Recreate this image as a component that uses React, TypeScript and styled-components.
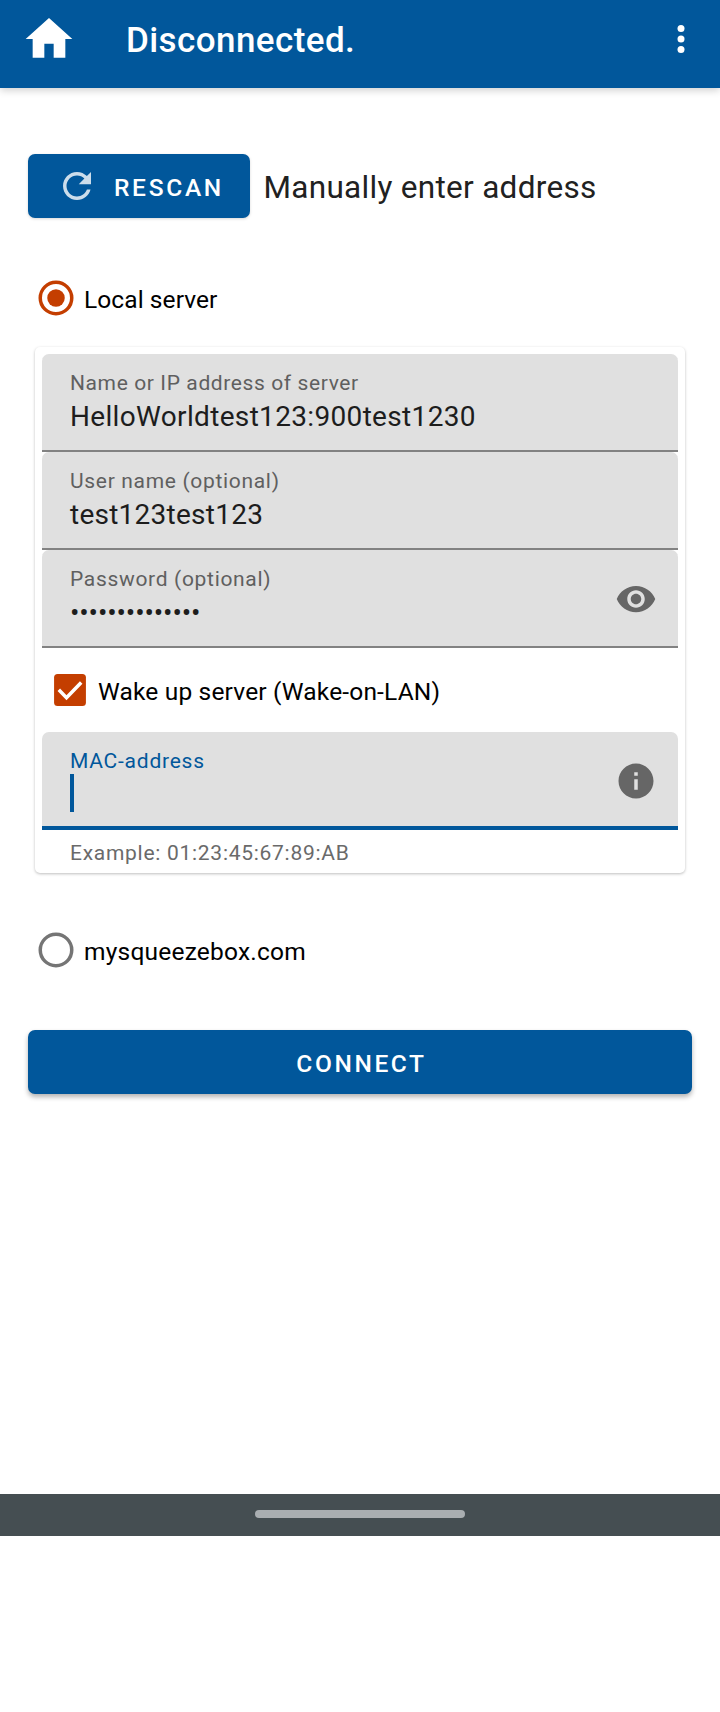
import React from 'react';
import styled, { createGlobalStyle } from 'styled-components';

const blue = '#01579b';
const orange = '#c43e00';

const GlobalStyle = createGlobalStyle`
  * { box-sizing: border-box; }
  body {
    margin: 0;
    background: #fff;
    font-family: Roboto, sans-serif;
  }
`;

const Screen = styled.div`
  display: flex;
  flex-direction: column;
  width: 720px;
  height: 1536px;
`;

const AppBar = styled.header`
  display: flex;
  align-items: flex-start;
  height: 88px;
  padding: 0 18px 0 21px;
  background: ${blue};
  color: #fff;
  box-shadow: 0 2px 8px rgba(0, 0, 0, 0.2);
`;

const HomeIcon = styled.svg`
  width: 56px;
  height: 56px;
  margin-top: 11px;
`;

const Title = styled.h1`
  flex: 1;
  margin: 0 0 0 49px;
  font-size: 35px;
  font-weight: 500;
  line-height: 82px;
  letter-spacing: 0.42px;
`;

const MenuIcon = styled.svg`
  width: 42px;
  height: 42px;
  margin-top: 18px;
`;

const Content = styled.main`
  display: flex;
  flex: 1;
  flex-direction: column;
  padding: 66px 28px 0;
`;

const ScanRow = styled.div`
  display: flex;
  align-items: center;
`;

const Button = styled.button<{ $raised?: boolean }>`
  display: flex;
  align-items: center;
  height: 64px;
  border: 0;
  border-radius: 7px;
  background: ${blue};
  color: #fff;
  font: 500 24.5px/30px Roboto, sans-serif;
  box-shadow: ${(p) =>
    p.$raised ? '0 3px 5px rgba(0, 0, 0, 0.3)' : '0 1px 3px rgba(0, 0, 0, 0.16)'};
`;

const RescanButton = styled(Button)`
  width: 222px;
  padding: 0 0 0 28px;
  letter-spacing: 2.7px;
`;

const ConnectButton = styled(Button)`
  justify-content: center;
  margin-top: 59px;
  padding: 0 0 0 3px;
  letter-spacing: 2.6px;
`;

const ButtonLabel = styled.span`
  padding-top: 3px;
`;

const Icon = styled.svg`
  flex: none;
  width: 42px;
  height: 42px;
`;

const RescanIcon = styled(Icon)`
  margin-right: 16px;
  opacity: 0.8;
`;

const ManualHint = styled.span`
  padding: 3px 0 0 13.5px;
  color: #212121;
  font-size: 31.5px;
  line-height: 40px;
  letter-spacing: 0.3px;
`;

const Option = styled.label<{ $top: number; $spacing: number }>`
  display: flex;
  align-items: center;
  height: 42px;
  margin-top: ${(p) => p.$top}px;
  padding-left: 7px;
  color: #000;
  font-size: 24.5px;
  line-height: 30px;
  letter-spacing: ${(p) => p.$spacing}px;
`;

const OptionText = styled.span`
  padding: 3px 0 0 7px;
`;

const Card = styled.section`
  margin: 28px 7px 0;
  padding: 7px 7px 8px;
  border-radius: 5px;
  background: #fff;
  box-shadow: 0 1px 3px rgba(0, 0, 0, 0.26);
`;

const Field = styled.div<{ $focused?: boolean }>`
  display: flex;
  align-items: center;
  justify-content: space-between;
  height: 98px;
  padding: 0 21px 0 28px;
  border-radius: 7px 7px 0 0;
  background: #e0e0e0;
  box-shadow: inset 0 ${(p) => (p.$focused ? `-4px ${blue}` : '-2px #828282')};
`;

const FieldBody = styled.div`
  align-self: stretch;
  padding-top: 17px;
`;

const FieldLabel = styled.div<{ $focused?: boolean; $spacing: number }>`
  color: ${(p) => (p.$focused ? blue : '#5f5f5f')};
  font-size: 21px;
  line-height: 24px;
  letter-spacing: ${(p) => p.$spacing}px;
`;

const FieldValue = styled.div<{ $spacing: number }>`
  margin-top: 6px;
  color: #1d1d1d;
  font-size: 28px;
  line-height: 32px;
  letter-spacing: ${(p) => p.$spacing}px;
`;

const Caret = styled.div`
  width: 4px;
  height: 38px;
  margin-top: 1px;
  background: ${blue};
`;

const WakeOption = styled.label`
  display: flex;
  align-items: center;
  height: 84px;
  padding-left: 7px;
  color: #000;
  font-size: 24.5px;
  line-height: 30px;
  letter-spacing: 0.17px;
`;

const Helper = styled.p`
  margin: 11px 0 0 28px;
  color: #6a6a6a;
  font-size: 21px;
  line-height: 24px;
  letter-spacing: 0.72px;
`;

const NavBar = styled.footer`
  display: flex;
  justify-content: center;
  height: 42px;
  padding-top: 16px;
  background: #454e52;
`;

const NavHandle = styled.div`
  width: 210px;
  height: 8px;
  border-radius: 4px;
  background: #a9aeb1;
`;

function Radio({ checked }: { checked?: boolean }) {
  const color = checked ? orange : '#757575';
  return (
    <Icon viewBox="0 0 24 24">
      <circle cx="12" cy="12" r="9" fill="none" stroke={color} strokeWidth="2" />
      {checked && <circle cx="12" cy="12" r="5" fill={color} />}
    </Icon>
  );
}

interface TextFieldProps {
  label: string;
  value: string;
  labelSpacing: number;
  valueSpacing: number;
  children?: React.ReactNode;
}

function TextField({ label, value, labelSpacing, valueSpacing, children }: TextFieldProps) {
  return (
    <Field>
      <FieldBody>
        <FieldLabel $spacing={labelSpacing}>{label}</FieldLabel>
        <FieldValue $spacing={valueSpacing}>{value}</FieldValue>
      </FieldBody>
      {children}
    </Field>
  );
}

export default function App() {
  return (
    <>
      <GlobalStyle />
      <Screen>
        <AppBar>
          <HomeIcon viewBox="0 0 24 24" fill="#fff">
            <path d="M10 20v-6h4v6h5v-8h3L12 3 2 12h3v8z" />
          </HomeIcon>
          <Title>Disconnected.</Title>
          <MenuIcon viewBox="0 0 24 24" fill="#fff">
            <circle cx="12" cy="6" r="2" />
            <circle cx="12" cy="12" r="2" />
            <circle cx="12" cy="18" r="2" />
          </MenuIcon>
        </AppBar>
        <Content>
          <ScanRow>
            <RescanButton>
              <RescanIcon viewBox="0 0 24 24" fill="#fff">
                <path d="M17.65 6.35C16.2 4.9 14.21 4 12 4c-4.42 0-7.99 3.58-7.99 8s3.57 8 7.99 8c3.73 0 6.84-2.55 7.73-6h-2.08c-.82 2.33-3.04 4-5.65 4-3.31 0-6-2.69-6-6s2.69-6 6-6c1.66 0 3.14.69 4.22 1.78L13 11h7V4l-2.35 2.35z" />
              </RescanIcon>
              <ButtonLabel>RESCAN</ButtonLabel>
            </RescanButton>
            <ManualHint>Manually enter address</ManualHint>
          </ScanRow>
          <Option $top={59} $spacing={0.08}>
            <Radio checked />
            <OptionText>Local server</OptionText>
          </Option>
          <Card>
            <TextField
              label="Name or IP address of server"
              value="HelloWorldtest123:900test1230"
              labelSpacing={0.61}
              valueSpacing={0.33}
            />
            <TextField
              label="User name (optional)"
              value="test123test123"
              labelSpacing={0.68}
              valueSpacing={0.25}
            />
            <TextField
              label="Password (optional)"
              value="••••••••••••••"
              labelSpacing={0.68}
              valueSpacing={-0.14}
            >
              <Icon viewBox="0 0 24 24" fill="#666">
                <path d="M12 4.5C7 4.5 2.73 7.61 1 12c1.73 4.39 6 7.5 11 7.5s9.27-3.11 11-7.5c-1.73-4.39-6-7.5-11-7.5zM12 17c-2.76 0-5-2.24-5-5s2.24-5 5-5 5 2.24 5 5-2.24 5-5 5zm0-8c-1.66 0-3 1.34-3 3s1.34 3 3 3 3-1.34 3-3-1.34-3-3-3z" />
              </Icon>
            </TextField>
            <WakeOption>
              <Icon viewBox="0 0 24 24">
                <rect x="2.9" y="2.9" width="18.2" height="18.2" rx="2" fill={orange} />
                <path d="M5.6 11.9L10 16.4 18.4 7.7" fill="none" stroke="#fff" strokeWidth="2" />
              </Icon>
              <OptionText>Wake up server (Wake-on-LAN)</OptionText>
            </WakeOption>
            <Field $focused>
              <FieldBody>
                <FieldLabel $focused $spacing={0.76}>
                  MAC-address
                </FieldLabel>
                <Caret />
              </FieldBody>
              <Icon viewBox="0 0 24 24" fill="#666">
                <path d="M12 2C6.48 2 2 6.48 2 12s4.48 10 10 10 10-4.48 10-10S17.52 2 12 2zm1 15h-2v-6h2v6zm0-8h-2V7h2v2z" />
              </Icon>
            </Field>
            <Helper>Example: 01:23:45:67:89:AB</Helper>
          </Card>
          <Option $top={56} $spacing={0.22}>
            <Radio />
            <OptionText>mysqueezebox.com</OptionText>
          </Option>
          <ConnectButton $raised>
            <ButtonLabel>CONNECT</ButtonLabel>
          </ConnectButton>
        </Content>
        <NavBar>
          <NavHandle />
        </NavBar>
      </Screen>
    </>
  );
}
